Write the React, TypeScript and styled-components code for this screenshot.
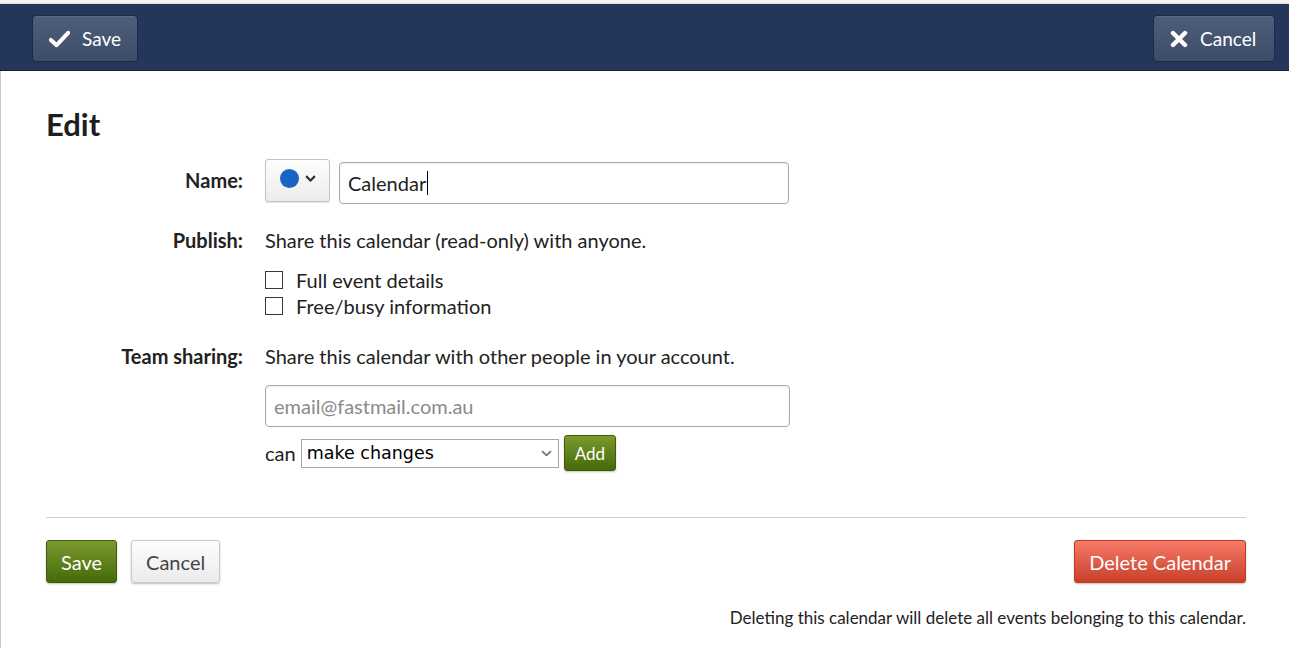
import React from 'react';
import styled, { createGlobalStyle } from 'styled-components';

const GlobalStyle = createGlobalStyle`
  html, body {
    margin: 0;
    padding: 0;
    background: #ffffff;
  }
  body {
    font-family: Lato, "Open Sans", sans-serif;
    color: #222;
  }
`;

const Page = styled.div`
  width: 1289px;
  height: 648px;
  overflow: hidden;
  display: flex;
  flex-direction: column;
`;

const TopStrip = styled.div`
  height: 3px;
  background: #f2f2f2;
  border-bottom: 1px solid #e0e0e0;
`;

const Toolbar = styled.div`
  height: 67px;
  background: #24375a;
  border-bottom: 1px solid #14213a;
  display: flex;
  align-items: flex-start;
  justify-content: space-between;
  padding: 11px 14px 0 32px;
  box-sizing: border-box;
`;

const BarButton = styled.button<{ $w: number }>`
  width: ${(p) => p.$w}px;
  height: 47px;
  display: flex;
  align-items: center;
  gap: 12px;
  padding: 0 16px;
  border-radius: 4px;
  border: 1px solid #1b2a45;
  background: linear-gradient(#4d5e7b, #3c4c69);
  color: #fff;
  font-family: inherit;
  font-size: 19px;
  box-shadow: inset 0 1px 0 rgba(255, 255, 255, 0.08);
`;

const Main = styled.div`
  flex: 1;
  border-left: 1px solid #c8c8c8;
  padding: 0 43px 0 45px;
`;

const Title = styled.h1`
  margin: 36px 0 0 0;
  font-size: 31px;
  font-weight: 700;
  line-height: 34px;
  color: #1e1e1e;
`;

const FormRow = styled.div<{ $top: number }>`
  display: grid;
  grid-template-columns: 197px 1fr;
  column-gap: 22px;
  margin-top: ${(p) => p.$top}px;
  align-items: start;
`;

const Label = styled.div<{ $pt?: number }>`
  text-align: right;
  font-weight: 700;
  font-size: 20px;
  color: #222;
  padding-top: ${(p) => p.$pt ?? 0}px;
  line-height: 24px;
`;

const Field = styled.div`
  display: flex;
  flex-direction: column;
`;

const Inline = styled.div<{ $gap?: number; $top?: number }>`
  display: flex;
  align-items: center;
  gap: ${(p) => p.$gap ?? 0}px;
  margin-top: ${(p) => p.$top ?? 0}px;
`;

const ColorButton = styled.button`
  width: 65px;
  height: 43px;
  border: 1px solid #c4c4c4;
  border-radius: 3px;
  background: linear-gradient(#fdfdfd, #ececec);
  box-shadow: 0 1px 1px rgba(0, 0, 0, 0.12);
  display: flex;
  align-items: center;
  justify-content: center;
  gap: 6px;
  padding: 0 0 4px 0;
`;

const Dot = styled.span`
  width: 19px;
  height: 19px;
  border-radius: 50%;
  background: #1964c5;
`;

const TextInput = styled.div<{ $w: number; $top?: number; $placeholder?: boolean }>`
  width: ${(p) => p.$w}px;
  height: 42px;
  margin-top: ${(p) => p.$top ?? 0}px;
  box-sizing: border-box;
  border: 1px solid #a9a9a9;
  border-radius: 4px;
  box-shadow: inset 0 1px 2px rgba(0, 0, 0, 0.08);
  display: flex;
  align-items: center;
  padding: 0 8px;
  font-size: 20px;
  color: ${(p) => (p.$placeholder ? '#8a8a8a' : '#222')};
`;

const Caret = styled.span`
  display: inline-block;
  width: 1px;
  height: 24px;
  background: #000;
  margin-left: 1px;
`;

const Text = styled.div`
  font-size: 20px;
  line-height: 24px;
  color: #222;
`;

const CheckList = styled.div`
  margin-top: 15px;
`;

const CheckRow = styled.label`
  display: flex;
  align-items: center;
  gap: 13px;
  font-size: 20px;
  line-height: 26px;
  color: #222;
`;

const Box = styled.span`
  width: 18px;
  height: 18px;
  box-sizing: border-box;
  border: 1px solid #3a3a3a;
  background: #fff;
`;

const Select = styled.div`
  width: 258px;
  height: 29px;
  box-sizing: border-box;
  border: 1px solid #a6a6a6;
  display: flex;
  align-items: center;
  justify-content: space-between;
  padding: 0 6px 0 5px;
  font-family: "DejaVu Sans", sans-serif;
  font-size: 17.5px;
  color: #000;
  margin-left: 5px;
`;

type Kind = 'green' | 'plain' | 'red';

const Button = styled.button<{ $kind: Kind; $small?: boolean }>`
  height: ${(p) => (p.$small ? 36 : 43)}px;
  padding: ${(p) => (p.$small ? '0 10px' : '0 14px')};
  margin-left: ${(p) => (p.$small ? 5 : 0)}px;
  border-radius: 3px;
  font-family: inherit;
  font-size: ${(p) => (p.$small ? 17 : 20)}px;
  box-shadow: 0 1px 2px rgba(0, 0, 0, 0.25);
  color: ${(p) => (p.$kind === 'plain' ? '#444' : '#fff')};
  border: 1px solid
    ${(p) => (p.$kind === 'green' ? '#3f5c0b' : p.$kind === 'red' ? '#bf3a22' : '#c9c9c9')};
  background: ${(p) =>
    p.$kind === 'green'
      ? 'linear-gradient(#7b9a2e, #456a08)'
      : p.$kind === 'red'
      ? 'linear-gradient(#f67a68, #c9402a)'
      : 'linear-gradient(#fdfdfd, #ebebeb)'};
`;

const Divider = styled.hr`
  border: 0;
  border-top: 1px solid #cfcfcf;
  margin: 46px 0 0 0;
`;

const Actions = styled.div`
  display: flex;
  align-items: center;
  gap: 14px;
  margin-top: 22px;
`;

const Spacer = styled.div`
  flex: 1;
`;

const Note = styled.div`
  text-align: right;
  font-size: 17px;
  color: #222;
  margin-top: 24px;
`;

const CheckIcon = () => (
  <svg width="22" height="18" viewBox="0 0 22 18">
    <path d="M2 10 L8 15.5 L20 2.5" fill="none" stroke="#fff" strokeWidth="4.2" strokeLinejoin="round" strokeLinecap="round" />
  </svg>
);

const CrossIcon = () => (
  <svg width="18" height="18" viewBox="0 0 18 18">
    <path d="M3 3 L15 15 M15 3 L3 15" fill="none" stroke="#fff" strokeWidth="4.4" strokeLinecap="round" />
  </svg>
);

const Chevron = ({ color = '#333', w = 10, sw = 1.6 }: { color?: string; w?: number; sw?: number }) => (
  <svg width={w} height={w * 0.6} viewBox="0 0 10 6">
    <path d="M1 1 L5 5 L9 1" fill="none" stroke={color} strokeWidth={sw} />
  </svg>
);

export default function App() {
  return (
    <Page>
      <GlobalStyle />
      <TopStrip />
      <Toolbar>
        <BarButton $w={106}>
          <CheckIcon />
          Save
        </BarButton>
        <BarButton $w={122}>
          <CrossIcon />
          Cancel
        </BarButton>
      </Toolbar>
      <Main>
        <Title>Edit</Title>

        <FormRow $top={16}>
          <Label $pt={11}>Name:</Label>
          <Inline $gap={9}>
            <ColorButton>
              <Dot />
              <Chevron w={11} sw={2} />
            </ColorButton>
            <TextInput $w={450} $top={5}>
              Calendar
              <Caret />
            </TextInput>
          </Inline>
        </FormRow>

        <FormRow $top={24}>
          <Label>Publish:</Label>
          <Field>
            <Text>Share this calendar (read-only) with anyone.</Text>
            <CheckList>
              <CheckRow>
                <Box />
                Full event details
              </CheckRow>
              <CheckRow>
                <Box />
                Free/busy information
              </CheckRow>
            </CheckList>
          </Field>
        </FormRow>

        <FormRow $top={25}>
          <Label>Team sharing:</Label>
          <Field>
            <Text>Share this calendar with other people in your account.</Text>
            <TextInput $w={525} $top={17} $placeholder>
              email@fastmail.com.au
            </TextInput>
            <Inline $top={8}>
              <Text>can</Text>
              <Select>
                make changes
                <Chevron color="#777" w={11} />
              </Select>
              <Button $kind="green" $small>
                Add
              </Button>
            </Inline>
          </Field>
        </FormRow>

        <Divider />

        <Actions>
          <Button $kind="green">Save</Button>
          <Button $kind="plain">Cancel</Button>
          <Spacer />
          <Button $kind="red">Delete Calendar</Button>
        </Actions>

        <Note>Deleting this calendar will delete all events belonging to this calendar.</Note>
      </Main>
    </Page>
  );
}
